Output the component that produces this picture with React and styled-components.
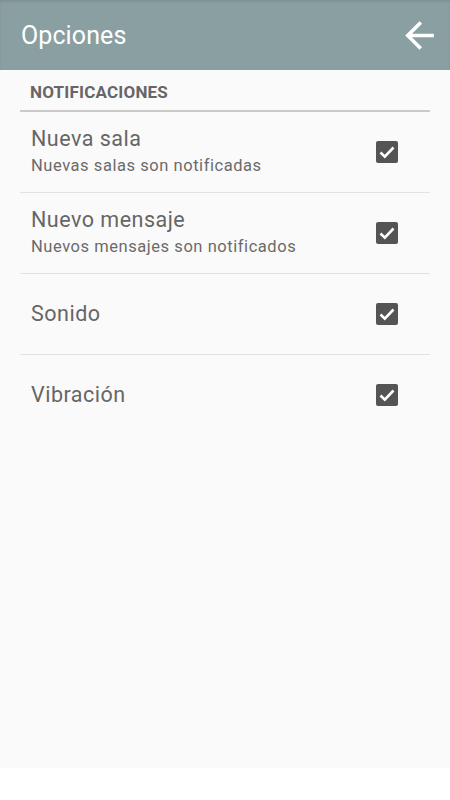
import React from 'react';
import styled, { createGlobalStyle } from 'styled-components';

const GlobalStyle = createGlobalStyle`
  body {
    margin: 0;
    background: #ffffff;
    font-family: Roboto, "Noto Sans", sans-serif;
  }
`;

const Screen = styled.div`
  height: 768px;
  background: #fafafa;
`;

const Toolbar = styled.header`
  height: 70px;
  background: #8a9fa1;
  display: flex;
  align-items: center;
  justify-content: space-between;
  padding: 0 9px 0 21px;
  box-sizing: border-box;
  box-shadow: inset 0 2px 2px rgba(0, 0, 0, 0.08);
`;

const Title = styled.h1`
  margin: 0;
  font-size: 25px;
  font-weight: 400;
  color: #ffffff;
  letter-spacing: 0.1px;
`;

const BackButton = styled.button`
  border: 0;
  padding: 0;
  background: none;
  display: flex;
  width: 43px;
  height: 43px;
`;

const List = styled.div`
  padding: 0 20px;
`;

const SectionHeader = styled.div`
  padding: 12px 10px 0;
  height: 28px;
  border-bottom: 2px solid #cacaca;
  font-size: 17px;
  font-weight: 700;
  color: #666666;
  line-height: 20px;
  letter-spacing: 0.2px;
`;

const Row = styled.div`
  height: 80px;
  display: flex;
  align-items: center;
  justify-content: space-between;
  padding: 0 32px 0 11px;
  border-bottom: ${p => (p.last ? 'none' : '1px solid #e2e2e2')};
`;

const Texts = styled.div`
  display: flex;
  flex-direction: column;
`;

const RowTitle = styled.div`
  font-size: 21.5px;
  color: #666666;
  line-height: 28px;
  letter-spacing: 0.5px;
`;

const RowSummary = styled.div`
  font-size: 16.5px;
  color: #6a6a6a;
  line-height: 26px;
  letter-spacing: 0.55px;
`;

const Box = styled.span`
  width: 22px;
  height: 22px;
  border-radius: 2px;
  background: #545454;
  display: flex;
`;

function Checkbox() {
  return (
    <Box>
      <svg width="22" height="22" viewBox="0 0 22 22">
        <polyline points="4.5,11.5 8.8,15.6 17.5,6.5" fill="none" stroke="#fff" strokeWidth="2.6" />
      </svg>
    </Box>
  );
}

const prefs = [
  { title: 'Nueva sala', summary: 'Nuevas salas son notificadas' },
  { title: 'Nuevo mensaje', summary: 'Nuevos mensajes son notificados' },
  { title: 'Sonido' },
  { title: 'Vibración' },
];

export default function App() {
  return (
    <>
      <GlobalStyle />
      <Screen>
        <Toolbar>
          <Title>Opciones</Title>
          <BackButton aria-label="Atrás">
            <svg width="43" height="43" viewBox="0 0 24 24">
              <path fill="#fff" d="M20 11H7.83l5.59-5.59L12 4l-8 8 8 8 1.41-1.41L7.83 13H20v-2z" />
            </svg>
          </BackButton>
        </Toolbar>
        <List>
          <SectionHeader>NOTIFICACIONES</SectionHeader>
          {prefs.map((p, i) => (
            <Row key={p.title} last={i === prefs.length - 1}>
              <Texts>
                <RowTitle>{p.title}</RowTitle>
                {p.summary && <RowSummary>{p.summary}</RowSummary>}
              </Texts>
              <Checkbox />
            </Row>
          ))}
        </List>
      </Screen>
    </>
  );
}
